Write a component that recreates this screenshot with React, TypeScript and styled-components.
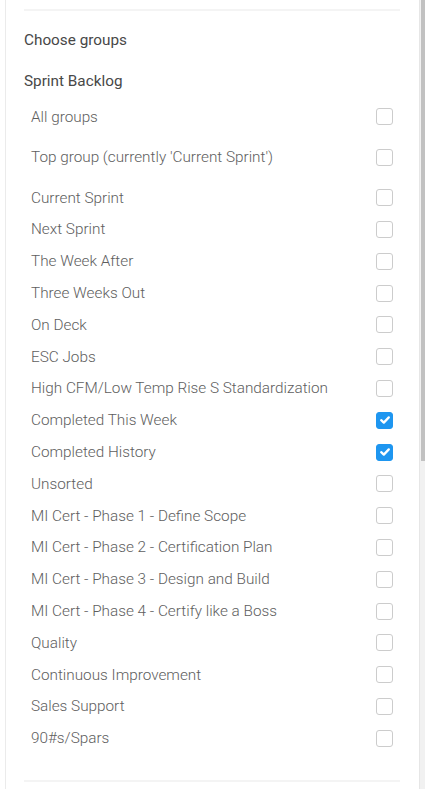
import React, { useState } from "react";
import styled, { createGlobalStyle } from "styled-components";

const GlobalStyle = createGlobalStyle`
  html, body {
    margin: 0;
    padding: 0;
    background: #ffffff;
    overflow: hidden;
  }
  * {
    box-sizing: border-box;
  }
`;

const groups = [
  "Current Sprint",
  "Next Sprint",
  "The Week After",
  "Three Weeks Out",
  "On Deck",
  "ESC Jobs",
  "High CFM/Low Temp Rise S Standardization",
  "Completed This Week",
  "Completed History",
  "Unsorted",
  "MI Cert - Phase 1 - Define Scope",
  "MI Cert - Phase 2 - Certification Plan",
  "MI Cert - Phase 3 - Design and Build",
  "MI Cert - Phase 4 - Certify like a Boss",
  "Quality",
  "Continuous Improvement",
  "Sales Support",
  "90#s/Spars",
];

const CheckIcon = () => (
  <svg width="12" height="12" viewBox="0 0 12 12" fill="none">
    <path
      d="M2.2 6.2 L4.8 8.6 L9.8 3.4"
      stroke="#ffffff"
      strokeWidth="2.3"
      strokeLinecap="round"
      strokeLinejoin="round"
    />
  </svg>
);

export default function App() {
  const [checked, setChecked] = useState<Record<string, boolean>>({
    "Completed This Week": true,
    "Completed History": true,
  });

  const toggle = (name: string) => {
    setChecked((prev) => ({ ...prev, [name]: !prev[name] }));
  };

  const renderRow = (name: string, spaced?: boolean) => (
    <Row key={name} spaced={spaced} onClick={() => toggle(name)}>
      <RowLabel>{name}</RowLabel>
      <Box checked={!!checked[name]}>{checked[name] && <CheckIcon />}</Box>
    </Row>
  );

  return (
    <Page>
      <GlobalStyle />
      <Panel>
        <Divider />
        <Heading>Choose groups</Heading>
        <SubHeading>Sprint Backlog</SubHeading>
        <List>
          {renderRow("All groups", true)}
          {renderRow("Top group (currently 'Current Sprint')", true)}
          {groups.map((g) => renderRow(g))}
        </List>
        <BottomDivider />
      </Panel>
      <ScrollTrack>
        <ScrollThumb />
      </ScrollTrack>
    </Page>
  );
}

const Page = styled.div`
  display: flex;
  height: 789px;
  padding-left: 5px;
  font-family: Roboto, "Liberation Sans", Arial, sans-serif;
`;

const Panel = styled.div`
  flex: 1;
  border-left: 1px solid #ebebeb;
  padding: 0 19px 0 18px;
  overflow: hidden;
`;

const Divider = styled.div`
  height: 2px;
  margin-top: 9px;
  background: #f4f4f4;
`;

const BottomDivider = styled(Divider)`
  margin-top: 26px;
`;

const Heading = styled.div`
  margin-top: 19px;
  line-height: 20px;
  font-size: 15.3px;
  color: #484848;
`;

const SubHeading = styled(Heading)`
  margin-top: 21px;
`;

const List = styled.div`
  display: flex;
  flex-direction: column;
  margin-top: 10px;
  padding: 0 7px;
`;

const Row = styled.div<{ spaced?: boolean }>`
  display: flex;
  align-items: center;
  justify-content: space-between;
  height: 31.8px;
  margin-bottom: ${(p) => (p.spaced ? "8.6px" : "0")};
  cursor: pointer;
`;

const RowLabel = styled.span`
  font-size: 15.3px;
  font-weight: 300;
  color: #5e5e5e;
  white-space: nowrap;
`;

const Box = styled.span<{ checked: boolean }>`
  display: inline-flex;
  align-items: center;
  justify-content: center;
  width: 17px;
  height: 17px;
  border-radius: 3px;
  border: 1px solid ${(p) => (p.checked ? "#1e96f0" : "#cccccc")};
  background: ${(p) => (p.checked ? "#1e96f0" : "#ffffff")};
`;

const ScrollTrack = styled.div`
  width: 6px;
  height: 100%;
  background: #f1f1f1;
  border-left: 1px solid #e6e6e6;
  padding-left: 1px;
`;

const ScrollThumb = styled.div`
  width: 4px;
  height: 461px;
  background: #c1c1c1;
`;
